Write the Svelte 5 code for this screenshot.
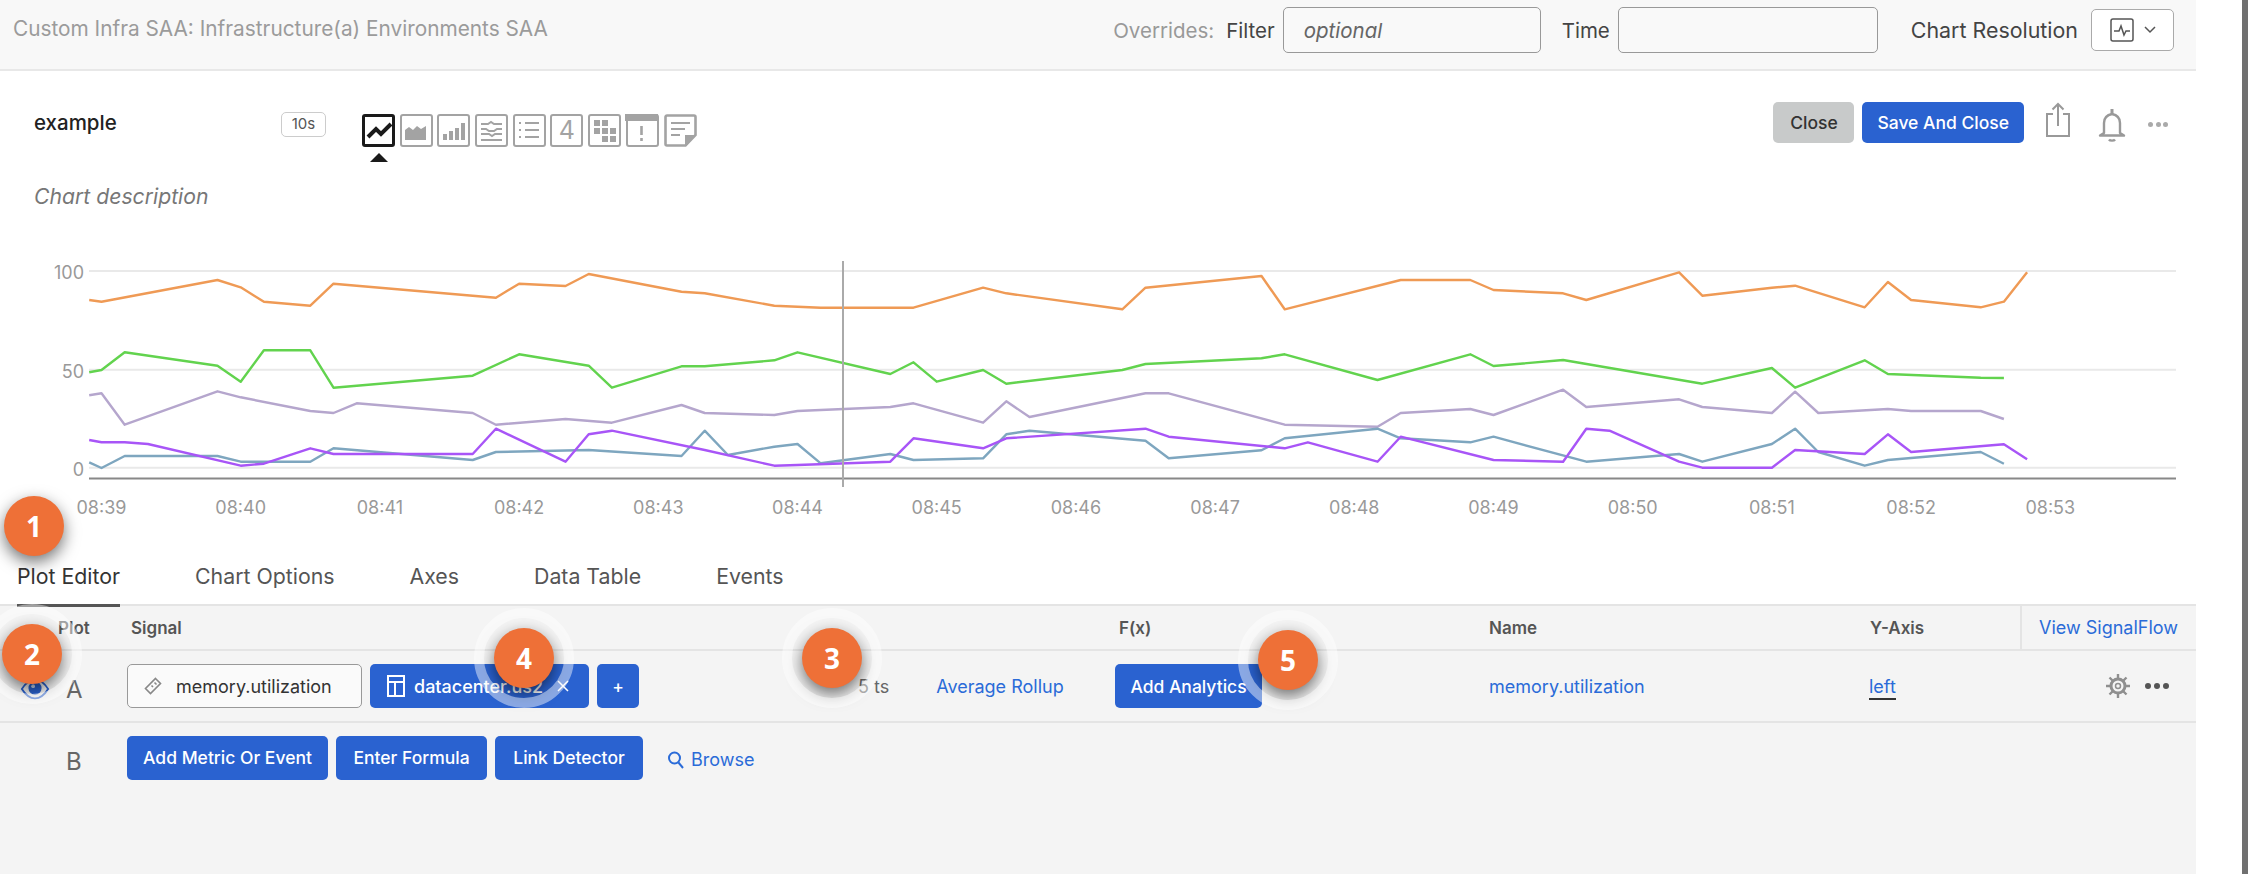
<script>
  // y values are pixel rows inside the chart svg, x is the 10s slot index
  const slot = (i) => 101.5 + 23.2 * i;
  const y3 = (v) => v / 3;

  const series = [
    { color: "#ef9a55", pts: [[-0.53,180],[0,185],[5,120],[6,142],[7,185],[9,197],[10,131],[17,173],[18,131],[20,138],[21,102],[25,155],[26,160],[29,197],[31,203],[35,203],[38,143],[39,160],[44,208],[45,143],[50,108],[51,208],[56,120],[59,120],[60,150],[63,160],[64,180],[68,97],[69,167],[72,143],[73,137],[76,202],[77,126],[78,180],[81,202],[82,185],[83,97]] },
    { color: "#62d34e", pts: [[-0.53,397],[0,390],[1,337],[5,377],[6,425],[7,331],[9,331],[10,443],[16,407],[18,343],[21,377],[22,443],[25,379],[26,379],[29,361],[30,337],[34,402],[35,367],[36,425],[38,390],[39,431],[44,390],[45,372],[50,355],[51,343],[55,420],[59,343],[60,378],[63,360],[69,431],[72,384],[73,443],[76,361],[77,402],[81,413],[82,414]] },
    { color: "#b5a6cd", pts: [[-0.53,466],[0,460],[1,554],[5,454],[6,472],[9,513],[10,519],[11,490],[16,519],[17,554],[20,537],[22,548],[25,495],[26,519],[29,525],[30,513],[34,501],[35,490],[38,548],[39,484],[40,531],[45,460],[46,460],[51,554],[55,560],[56,519],[59,507],[60,525],[63,449],[64,501],[68,478],[69,501],[72,519],[73,455],[74,519],[77,507],[78,513],[81,513],[82,537]] },
    { color: "#7ea6bf", pts: [[-0.53,667],[0,684],[1,648],[5,648],[6,665],[9,665],[10,625],[16,660],[17,636],[21,630],[25,648],[26,572],[27,645],[29,620],[30,612],[31,670],[34,642],[35,660],[38,655],[39,583],[40,572],[45,602],[46,655],[50,631],[51,595],[55,566],[56,595],[59,607],[60,590],[64,665],[68,642],[69,665],[72,612],[73,566],[74,636],[76,677],[77,660],[81,636],[82,671]] },
    { color: "#a855f7", pts: [[-0.53,600],[0,607],[1,607],[2,612],[6,677],[7,671],[9,625],[10,642],[16,642],[17,566],[20,665],[21,583],[22,572],[26,630],[29,677],[30,675],[34,665],[35,595],[38,625],[39,595],[45,566],[46,590],[51,625],[52,607],[55,665],[56,590],[60,660],[63,665],[64,566],[65,572],[68,665],[69,683],[72,683],[73,630],[76,642],[77,583],[78,636],[82,613],[83,658]] },
  ];

  const toPoints = (pts) => pts.map(([i, v]) => `${slot(i).toFixed(1)},${y3(v).toFixed(1)}`).join(" ");

  const times = Array.from({ length: 15 }, (_, i) => `08:${39 + i}`);
  const tabs = ["Plot Editor", "Chart Options", "Axes", "Data Table", "Events"];
</script>

<div class="screen">
  <main class="page">
    <header class="head">
      <div class="crumb">Custom Infra SAA: Infrastructure(a) Environments SAA</div>
      <div class="overrides">
        <span class="muted">Overrides:</span>
        <span class="lbl filter-lbl">Filter</span>
        <div class="field filter"><em>optional</em></div>
        <span class="lbl time-lbl">Time</span>
        <div class="field time"></div>
        <span class="lbl res-lbl">Chart Resolution</span>
        <div class="res-btn">
          <svg width="26" height="26" viewBox="0 0 26 26" fill="none" stroke="#555" stroke-width="1.5">
            <rect x="2" y="2" width="22" height="22" rx="2" />
            <path d="M5 14h5l2-5 3 9 2-4h4" />
          </svg>
          <svg width="14" height="10" viewBox="0 0 14 10" fill="none" stroke="#555" stroke-width="1.5">
            <path d="M2 2l5 5 5-5" />
          </svg>
        </div>
      </div>
    </header>

    <section class="title-row">
      <div class="title">example</div>
      <div class="rate">10s</div>
      <div class="types">
        <div class="type active">
          <svg viewBox="0 0 33 33"><path d="M5 22l8-8 5 5 10-10" fill="none" stroke="#1a1a1a" stroke-width="4" /></svg>
          <i class="caret"></i>
        </div>
        <div class="type">
          <svg viewBox="0 0 33 33"><path d="M6 26V16l4-3 4 3 4-4 4 3 5-3v14z" fill="#a3a3a3" /></svg>
        </div>
        <div class="type">
          <svg viewBox="0 0 33 33" fill="#a3a3a3"><rect x="6" y="20" width="4" height="6" /><rect x="12" y="17" width="4" height="9" /><rect x="18" y="14" width="4" height="12" /><rect x="24" y="9" width="4" height="17" /></svg>
        </div>
        <div class="type">
          <svg viewBox="0 0 33 33" fill="none" stroke="#a3a3a3" stroke-width="2"><path d="M6 10h7l3-2 3 2h8M6 15h5l3 2h5l3-2h5M6 20h8l3 2 3-2h7M6 26h21" /></svg>
        </div>
        <div class="type">
          <svg viewBox="0 0 33 33" stroke="#a3a3a3" stroke-width="2"><path d="M13 9h14M13 16h14M13 23h14" /><path d="M7 9h2M7 16h2M7 23h2" /></svg>
        </div>
        <div class="type num">4</div>
        <div class="type">
          <svg viewBox="0 0 33 33" fill="#a3a3a3"><rect x="6" y="6" width="6" height="6" /><rect x="14" y="6" width="6" height="6" /><rect x="6" y="14" width="6" height="6" /><rect x="14" y="14" width="6" height="6" /><rect x="22" y="14" width="6" height="6" /><rect x="14" y="22" width="6" height="6" /><rect x="22" y="22" width="6" height="6" /></svg>
        </div>
        <div class="type event">
          <svg viewBox="0 0 33 33" fill="#a3a3a3"><rect x="0" y="0" width="33" height="7" /><rect x="15.2" y="12" width="2.6" height="9" /><rect x="15.2" y="24" width="2.6" height="3" /></svg>
        </div>
        <div class="type note">
          <svg viewBox="0 0 33 33"><path d="M1.5 3a1.5 1.5 0 0 1 1.5-1.5h27a1.5 1.5 0 0 1 1.5 1.5v18l-10 10.5H3A1.5 1.5 0 0 1 1.5 30z" fill="#fff" stroke="#a3a3a3" stroke-width="2.6" /><path d="M21 31l0-10h11z" fill="#a3a3a3" /><path d="M7 9h19M7 15h14M7 21h9" stroke="#a3a3a3" stroke-width="2.2" /></svg>
        </div>
      </div>
      <div class="actions">
        <button class="btn grey">Close</button>
        <button class="btn">Save And Close</button>
        <svg class="share" width="26" height="36" viewBox="0 0 26 36" fill="none" stroke="#999" stroke-width="2">
          <path d="M8 12H2v22h22V12h-6M13 24V2M7.5 7.5L13 2l5.5 5.5" />
        </svg>
        <svg class="bell" width="28" height="34" viewBox="0 0 28 34" fill="none" stroke="#999" stroke-width="2.4">
          <path d="M6 25V15c0-5 3-8 8-9 5 1 8 4 8 9v10l4 2.5H2z" stroke-linejoin="round" />
          <path d="M14 1v5" stroke-width="3" />
          <path d="M11 31.5c1 1.5 5 1.5 6 0" />
        </svg>
        <span class="more light"><i></i><i></i><i></i></span>
      </div>
    </section>

    <div class="desc">Chart description</div>

    <svg class="chart" width="2196" height="290" viewBox="0 0 2196 290">
      <g stroke="#e9e9e9" stroke-width="2">
        <line x1="89" x2="2176" y1="31" y2="31" />
        <line x1="89" x2="2176" y1="129.7" y2="129.7" />
        <line x1="89" x2="2176" y1="227.7" y2="227.7" />
      </g>
      <line x1="89" x2="2176" y1="238.5" y2="238.5" stroke="#888" stroke-width="2" />
      <g class="axis" text-anchor="end">
        <text x="84" y="39">100</text>
        <text x="84" y="138">50</text>
        <text x="84" y="236">0</text>
      </g>
      {#each series as s}
        <polyline points={toPoints(s.pts)} fill="none" stroke={s.color} stroke-width="2.4" stroke-linejoin="round" />
      {/each}
      <line x1="843" x2="843" y1="21" y2="247" stroke="#aaa" stroke-width="2" />
      <g class="axis" text-anchor="middle">
        {#each times as t, i}
          <text x={101.5 + 139.2 * i} y="274">{t}</text>
        {/each}
      </g>
    </svg>

    <nav class="tabs">
      {#each tabs as t, i}
        <div class="tab" class:on={i === 0}>{t}</div>
      {/each}
    </nav>

    <section class="editor">
      <div class="row top">
        <div></div>
        <div class="th">Plot</div>
        <div class="th sig">Signal</div>
        <div class="th fx">F(x)</div>
        <div class="th">Name</div>
        <div class="th ya">Y-Axis</div>
        <div class="link view">View SignalFlow</div>
      </div>

      <div class="row a">
        <div class="eye">
          <svg width="30" height="24" viewBox="0 0 32 24">
            <path d="M2 12C7 4 11 2 16 2s9 2 14 10c-5 8-9 10-14 10S7 20 2 12z" fill="none" stroke="#2a62d0" stroke-width="2" />
            <circle cx="16" cy="11" r="7" fill="#2a62d0" />
            <circle cx="14" cy="9" r="2" fill="#cfdcf5" />
          </svg>
        </div>
        <div class="letter">A</div>
        <div class="signal">
          <div class="metric">
            <svg width="18" height="18" viewBox="0 0 18 18" fill="none" stroke="#888" stroke-width="1.6">
              <path d="M11.5 1.5l5 5-10 10-5-5z" />
              <path d="M10.5 5.5l2 2M7.5 8.5L9 10" />
            </svg>
            <span>memory.utilization</span>
          </div>
          <button class="btn chip">
            <svg width="18" height="22" viewBox="0 0 18 22" fill="none" stroke="#fff" stroke-width="2">
              <rect x="1" y="1" width="16" height="20" />
              <path d="M1 7h16M8 7v14" />
            </svg>
            <span>datacenter.us2</span>
            <svg class="x" width="14" height="14" viewBox="0 0 14 14" stroke="#fff" stroke-width="1.5"><path d="M2 2l10 10M12 2L2 12" /></svg>
          </button>
          <button class="btn plus">+</button>
          <span class="ts">5 ts</span>
          <span class="link rollup">Average Rollup</span>
        </div>
        <div><button class="btn analytics">Add Analytics</button></div>
        <div class="link">memory.utilization</div>
        <div class="link axis-left"><span>left</span></div>
        <div class="tools">
          <svg width="26" height="26" viewBox="0 0 26 26" fill="none" stroke="#8f8f8f">
            <circle cx="13" cy="13" r="7" stroke-width="3" />
            <circle cx="13" cy="13" r="2.5" stroke-width="1.5" />
            <path d="M13 1v5M13 20v5M1 13h5M20 13h5M4.5 4.5L8 8M18 18l3.5 3.5M21.5 4.5L18 8M8 18l-3.5 3.5" stroke-width="2.4" />
          </svg>
          <span class="more"><i></i><i></i><i></i></span>
        </div>
      </div>

      <div class="row b">
        <div></div>
        <div class="letter">B</div>
        <div class="signal">
          <button class="btn add-metric">Add Metric Or Event</button>
          <button class="btn formula">Enter Formula</button>
          <button class="btn detector">Link Detector</button>
          <span class="link browse">
            <svg width="18" height="20" viewBox="0 0 18 20" fill="none" stroke="#2a6bd8" stroke-width="2">
              <circle cx="7.5" cy="8" r="5.5" />
              <path d="M11.5 12.5L16 18" />
            </svg>
            Browse
          </span>
        </div>
      </div>
    </section>

    <div class="step s1">1</div>
    <div class="step s2 halo">2</div>
    <div class="step s3 halo">3</div>
    <div class="step s4 halo">4</div>
    <div class="step s5 halo">5</div>
  </main>
  <div class="gutter"></div>
  <div class="edge"></div>
</div>

<style>
  :global(body) {
    margin: 0;
    background: #fff;
  }

  .screen {
    display: flex;
    height: 874px;
    overflow: hidden;
    font-family: Inter, "Liberation Sans", sans-serif;
    color: #333;
  }

  .page {
    position: relative;
    width: 2196px;
    flex: none;
  }

  .gutter {
    width: 46px;
    flex: none;
  }

  .edge {
    flex: 1;
    background: #707070;
  }

  .head {
    display: flex;
    align-items: center;
    justify-content: space-between;
    box-sizing: border-box;
    height: 71px;
    padding: 0 22px 0 13px;
    background: #f8f8f8;
    border-bottom: 2px solid #e8e8e8;
  }

  .crumb {
    font-size: 20.8px;
    color: #9b9b9b;
    margin-bottom: 12px;
  }

  .overrides {
    display: flex;
    align-items: center;
    font-size: 20.5px;
    margin-bottom: 9px;
  }

  .muted {
    color: #999;
  }

  .lbl {
    color: #444;
  }

  .filter-lbl {
    margin-left: 12px;
  }

  .field {
    box-sizing: border-box;
    height: 46px;
    background: #f9f9f9;
    border: 1.5px solid #999;
    border-radius: 5px;
  }

  .filter {
    width: 258px;
    margin-left: 8px;
    padding: 10px 20px;
    color: #666;
  }

  .time-lbl {
    margin-left: 21px;
  }

  .time {
    width: 260px;
    margin-left: 8px;
  }

  .res-lbl {
    margin-left: 33px;
    font-size: 21.4px;
  }

  .res-btn {
    display: flex;
    align-items: center;
    justify-content: center;
    gap: 8px;
    box-sizing: border-box;
    width: 83px;
    height: 42px;
    margin-left: 13px;
    background: #fff;
    border: 1.5px solid #aaa;
    border-radius: 5px;
  }

  .title-row {
    display: flex;
    align-items: flex-start;
    box-sizing: border-box;
    height: 109px;
    padding: 31px 28px 0 34px;
  }

  .title {
    width: 247px;
    margin-top: 8px;
    font-size: 20.5px;
    font-weight: 500;
    color: #222;
  }

  .rate {
    box-sizing: border-box;
    width: 45px;
    height: 25px;
    margin-top: 10px;
    border: 1.5px solid #ccc;
    border-radius: 5px;
    font-size: 15px;
    line-height: 22px;
    text-align: center;
    color: #555;
  }

  .types {
    display: flex;
    gap: 4.7px;
    margin: 12px 0 0 36px;
  }

  .type {
    position: relative;
    box-sizing: border-box;
    width: 33px;
    height: 33px;
    border: 2.5px solid #a3a3a3;
    border-radius: 3px;
    background: #fff;
  }

  .type svg {
    position: absolute;
    top: -2.5px;
    left: -2.5px;
    width: 33px;
    height: 33px;
  }

  .type.active {
    border: 3px solid #1a1a1a;
  }

  .type.num {
    font-size: 25px;
    line-height: 28px;
    text-align: center;
    color: #a3a3a3;
  }

  .type.note {
    border: 0;
  }

  .type.note svg {
    top: 0;
    left: 0;
  }

  .caret {
    position: absolute;
    top: 36px;
    left: 5px;
    border-left: 9px solid transparent;
    border-right: 9px solid transparent;
    border-bottom: 9px solid #1a1a1a;
  }

  .actions {
    display: flex;
    align-items: flex-start;
    margin-left: auto;
  }

  .btn {
    box-sizing: border-box;
    height: 44px;
    padding: 0 15px;
    background: #2a62d0;
    border: 0;
    border-radius: 5px;
    font: 500 17.5px Inter, "Liberation Sans", sans-serif;
    color: #fff;
  }

  .actions .btn {
    height: 41px;
  }

  .btn.grey {
    width: 81px;
    margin-right: 8px;
    padding: 0;
    background: #c8caca;
    color: #333;
  }

  .analytics {
    width: 147px;
    padding: 0;
  }

  .add-metric {
    width: 201px;
    padding: 0;
  }

  .formula {
    width: 151px;
    padding: 0;
  }

  .detector {
    width: 148px;
    padding: 0;
  }

  .share {
    margin-left: 21px;
  }

  .bell {
    margin: 6px 0 0 27px;
  }

  .more {
    display: flex;
    gap: 3px;
  }

  .more i {
    width: 6px;
    height: 6px;
    border-radius: 50%;
    background: #555;
  }

  .more.light {
    gap: 2.5px;
    margin: 20px 0 0 22px;
  }

  .more.light i {
    width: 5px;
    height: 5px;
    background: #aaa;
  }

  .desc {
    box-sizing: border-box;
    height: 60px;
    padding: 3px 0 0 34px;
    font-size: 21.2px;
    font-style: italic;
    color: #777;
  }

  .chart {
    display: block;
  }

  .axis {
    font-size: 18px;
    fill: #999;
  }

  .tabs {
    display: flex;
    gap: 75px;
    box-sizing: border-box;
    height: 76px;
    padding: 28px 0 0 17px;
  }

  .tab {
    height: 46px;
    font-size: 21.3px;
    line-height: 37px;
    color: #555;
  }

  .tab.on {
    color: #333;
    border-bottom: 3px solid #555;
  }

  .editor {
    height: 270px;
    background: #f4f4f4;
    border-top: 2px solid #e4e4e4;
    margin-top: -2px;
    box-sizing: border-box;
  }

  .row {
    display: grid;
    grid-template-columns: 58px 69px 988px 374px 380px 151px 176px;
    align-items: center;
    font-size: 18px;
  }

  .row.top {
    height: 43px;
    border-bottom: 2px solid #e4e4e4;
  }

  .row.a {
    height: 70px;
    border-bottom: 2px solid #e4e4e4;
  }

  .row.b {
    height: 69px;
  }

  .th {
    font-weight: 600;
    font-size: 17px;
    color: #555;
  }

  .sig {
    padding-left: 4px;
  }

  .fx {
    padding-left: 4px;
  }

  .ya {
    padding-left: 1px;
  }

  .link {
    color: #2a6bd8;
  }

  .view {
    align-self: stretch;
    padding-left: 17px;
    line-height: 43px;
    border-left: 2px solid #e4e4e4;
    font-size: 18px;
  }

  .eye {
    display: flex;
    justify-content: flex-end;
    padding-right: 8px;
    margin-top: 6px;
  }

  .letter {
    padding: 6px 0 0 8px;
    font-size: 24px;
    color: #666;
  }

  .b .letter {
    padding-top: 8px;
  }

  .signal {
    display: flex;
    align-items: center;
    gap: 8px;
  }

  .metric {
    display: flex;
    align-items: center;
    gap: 14px;
    box-sizing: border-box;
    width: 235px;
    height: 44px;
    padding-left: 16px;
    background: #fafafa;
    border: 1.5px solid #999;
    border-radius: 5px;
    color: #333;
  }

  .chip {
    display: flex;
    align-items: center;
    gap: 9px;
    width: 219px;
    padding: 0 0 0 17px;
    font-size: 18px;
  }

  .chip .x {
    margin-left: auto;
    margin-right: 19px;
  }

  .plus {
    width: 42px;
    padding: 0;
  }

  .ts {
    margin-left: 211px;
    color: #666;
  }

  .rollup {
    margin-left: 39px;
  }

  .axis-left span {
    padding-bottom: 1px;
    border-bottom: 2px solid #333;
  }

  .tools {
    display: flex;
    align-items: center;
    gap: 14px;
    padding-left: 85px;
  }

  .browse {
    display: flex;
    align-items: center;
    gap: 6px;
    margin: 4px 0 0 16px;
  }

  .step {
    position: absolute;
    width: 60px;
    height: 60px;
    border-radius: 50%;
    background: #ee7037;
    box-shadow: 0 6px 16px rgba(0, 0, 0, 0.55);
    font: 700 28px/60px "Open Sans", sans-serif;
    text-align: center;
    color: #fff;
  }

  .halo::after {
    content: "";
    position: absolute;
    inset: -20px;
    border: 10px solid rgba(255, 255, 255, 0.45);
    border-radius: 50%;
  }

  .s1 { left: 4px; top: 496px; }
  .s2 { left: 2px; top: 624px; }
  .s3 { left: 802px; top: 628px; }
  .s4 { left: 494px; top: 628px; }
  .s5 { left: 1258px; top: 630px; }
</style>
